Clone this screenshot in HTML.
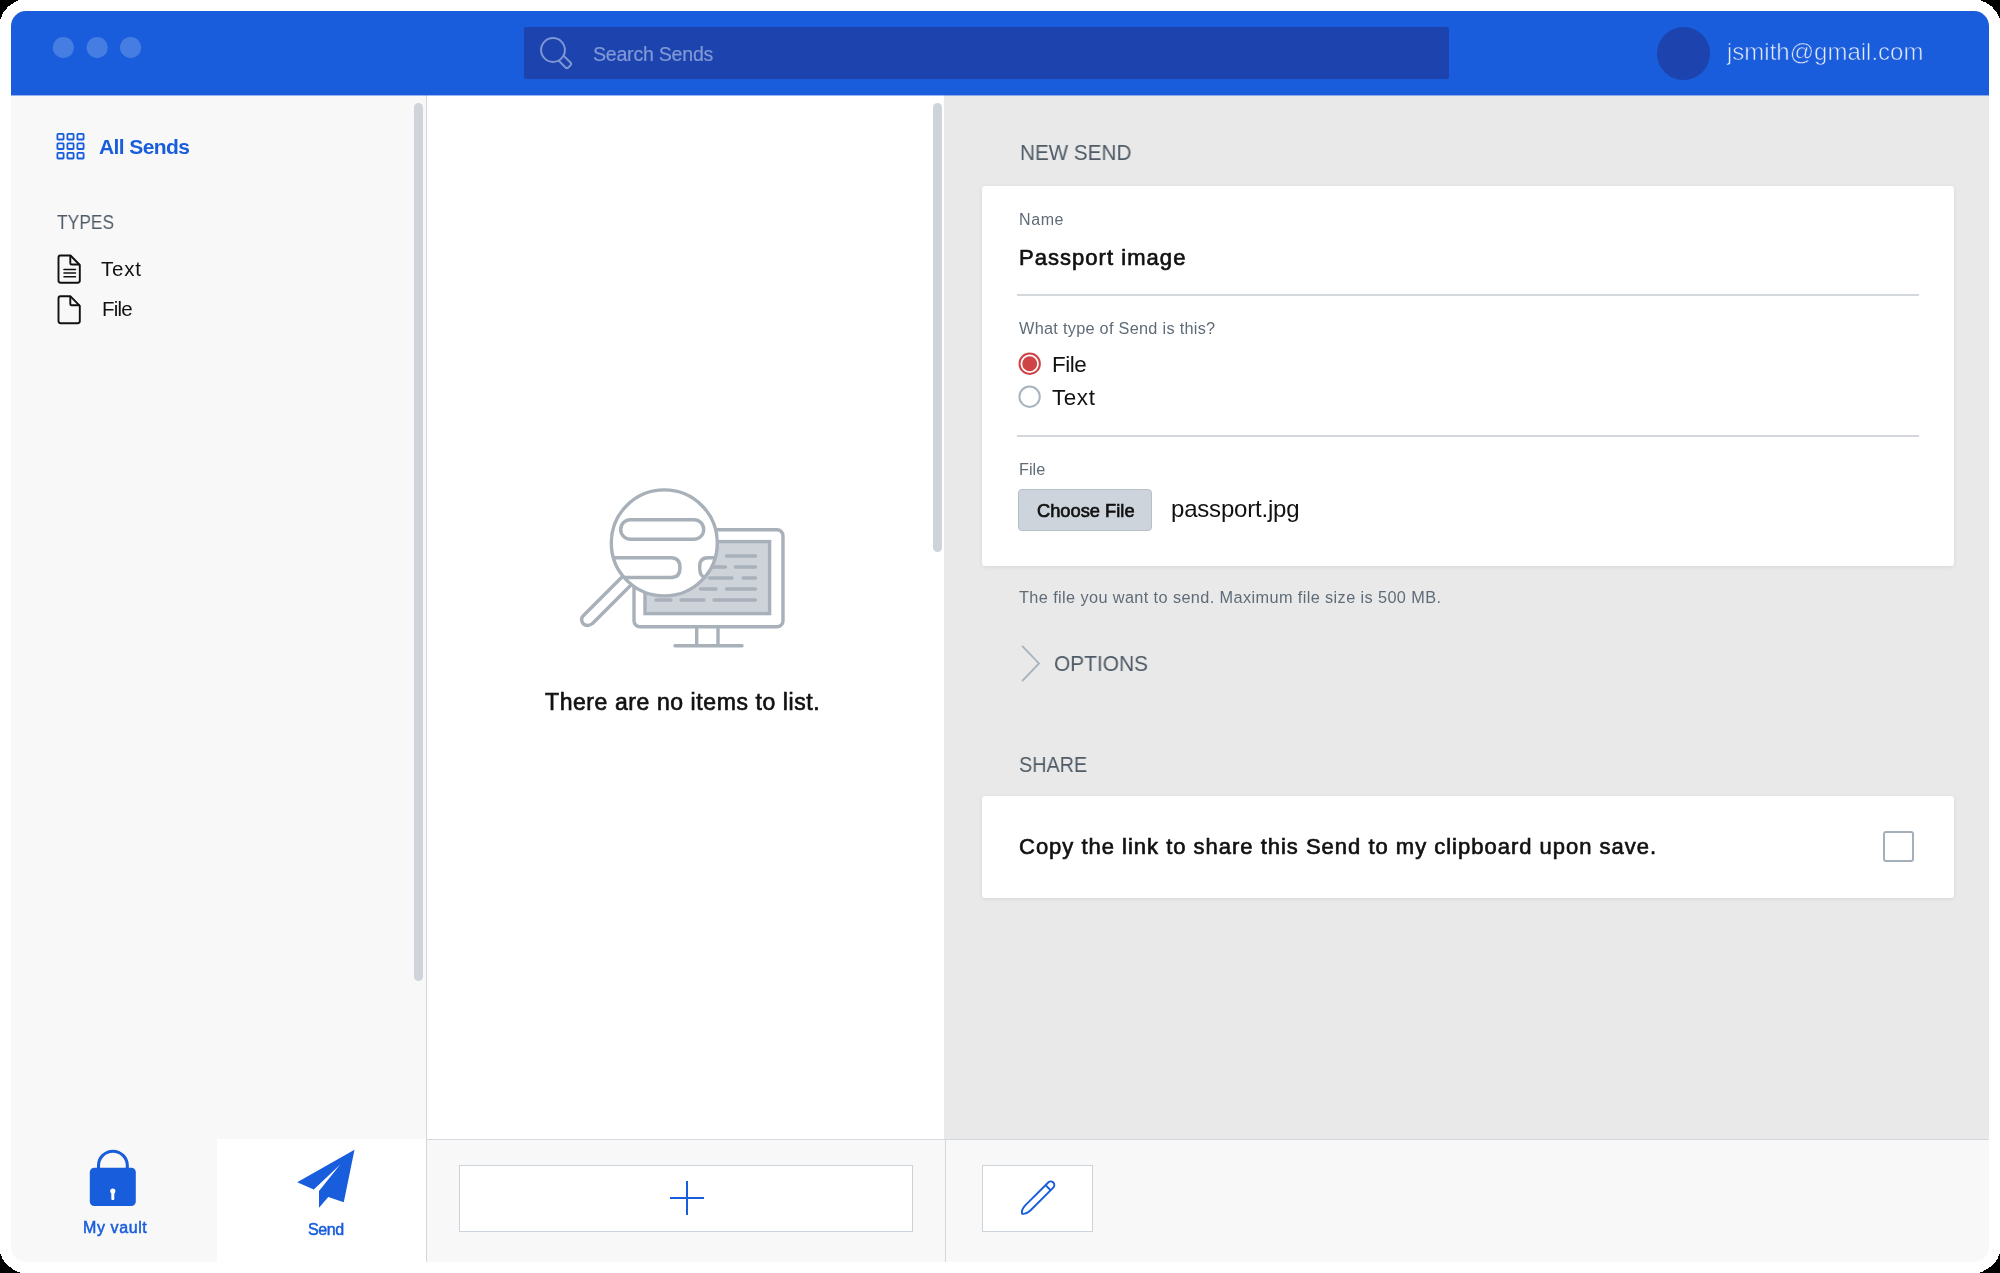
<!DOCTYPE html>
<html><head><meta charset="utf-8">
<style>
html,body{margin:0;padding:0;width:2000px;height:1273px;overflow:hidden;background:#000;}
body{font-family:"Liberation Sans",sans-serif;position:relative;}
#outer{position:absolute;left:0;top:0;width:2000px;height:1273px;background:#fff;}
#win{position:absolute;left:0;top:0;width:2000px;height:1273px;clip-path:inset(11px 11px 11px 11px round 15px);}
.a{position:absolute;}
.t{position:absolute;white-space:nowrap;line-height:1;will-change:transform;}
</style></head>
<body>
<div id="outer"></div>
<div id="win">
  <!-- header -->
  <div class="a" style="left:0;top:0;width:2000px;height:95px;background:#1a5ddc;"></div>
  <div class="a" style="left:0;top:95px;width:2000px;height:1px;background:rgba(26,93,220,0.45);z-index:1;"></div>
  <svg class="a" style="left:40px;top:30px" width="110" height="36" viewBox="40 30 110 36"><g fill="#467de2"><circle cx="63.4" cy="47.6" r="10.6"/><circle cx="97.2" cy="47.6" r="10.6"/><circle cx="130.6" cy="47.6" r="10.6"/></g></svg>
  <div class="a" style="left:524px;top:27px;width:925px;height:52px;background:#1c43ae;border-radius:2px;"></div>
  <svg class="a" style="left:536px;top:33px" width="42" height="42" viewBox="0 0 42 42">
    <circle cx="17" cy="17" r="11.9" fill="none" stroke="#7f96d4" stroke-width="2"/>
    <path d="M-3.5 11.4 V21.2 Q-3.5 23.2 -1.5 23.2 H1.5 Q3.5 23.2 3.5 21.2 V11.4" transform="translate(17,17) rotate(-45)" fill="none" stroke="#7f96d4" stroke-width="2"/>
  </svg>
  <div class="t" id="srch" style="left:593px;top:44.6px;font-size:19.6px;color:#8099d6;-webkit-text-stroke:0.2px #8099d6;letter-spacing:-0.25px;">Search Sends</div>
  <div class="a" style="left:1657px;top:27px;width:53px;height:53px;border-radius:50%;background:#1c43ae;"></div>
  <div class="t" id="email" style="left:1727px;top:40px;font-size:24px;color:#e3eaf8;-webkit-text-stroke:0.6px #1a5ddc;">jsmith@gmail.com</div>

  <!-- sidebar -->
  <div class="a" style="left:0;top:95px;width:426px;height:1180px;background:#f8f8f8;"></div>
  <div class="a" style="left:426px;top:95px;width:1px;height:1180px;background:#d3d8de;"></div>
  <div class="a" style="left:414px;top:103px;width:9px;height:878px;border-radius:5px;background:#cfd4db;"></div>
  <svg class="a" style="left:55px;top:132px" width="32" height="29" viewBox="0 0 32 29">
    <g fill="none" stroke="#175ddc" stroke-width="1.8">
      <rect x="2.4" y="1.9" width="6.2" height="5.6" rx="0.8"/><rect x="12.4" y="1.9" width="6.2" height="5.6" rx="0.8"/><rect x="22.4" y="1.9" width="6.2" height="5.6" rx="0.8"/>
      <rect x="2.4" y="11.4" width="6.2" height="5.6" rx="0.8"/><rect x="12.4" y="11.4" width="6.2" height="5.6" rx="0.8"/><rect x="22.4" y="11.4" width="6.2" height="5.6" rx="0.8"/>
      <rect x="2.4" y="20.9" width="6.2" height="5.6" rx="0.8"/><rect x="12.4" y="20.9" width="6.2" height="5.6" rx="0.8"/><rect x="22.4" y="20.9" width="6.2" height="5.6" rx="0.8"/>
    </g>
  </svg>
  <div class="t" id="allsends" style="left:99px;top:136px;font-size:21px;font-weight:bold;color:#175ddc;letter-spacing:-0.6px;">All Sends</div>
  <div class="t" id="types" style="left:57px;top:212px;font-size:20.5px;color:#4f5b66;transform:scaleX(0.85);transform-origin:0 0;">TYPES</div>
  <svg class="a" style="left:56px;top:253px" width="28" height="32" viewBox="0 0 28 32">
    <path d="M4.5 2.5 H14.5 L23.8 12 V27.5 Q23.8 29.7 21.6 29.7 H4.7 Q2.5 29.7 2.5 27.5 V4.7 Q2.5 2.5 4.5 2.5 Z" fill="none" stroke="#111" stroke-width="1.9" stroke-linejoin="round"/>
    <path d="M14.3 2.6 V10.2 Q14.3 11.5 15.6 11.5 H23.6" fill="none" stroke="#111" stroke-width="1.9"/>
    <path d="M8 16.5 H19.5 M8 20 H19.5 M8 23.7 H19.5" stroke="#111" stroke-width="1.6" stroke-linecap="round"/>
  </svg>
  <div class="t" id="txt1" style="left:101px;top:259px;font-size:20.5px;color:#111;letter-spacing:0.8px;">Text</div>
  <svg class="a" style="left:56px;top:294px" width="28" height="32" viewBox="0 0 28 32">
    <path d="M4.5 2.3 H14.5 L23.8 11.8 V27 Q23.8 29.2 21.6 29.2 H4.7 Q2.5 29.2 2.5 27 V4.5 Q2.5 2.3 4.5 2.3 Z" fill="none" stroke="#111" stroke-width="1.9" stroke-linejoin="round"/>
    <path d="M14.3 2.4 V10 Q14.3 11.3 15.6 11.3 H23.6" fill="none" stroke="#111" stroke-width="1.9"/>
  </svg>
  <div class="t" id="file1" style="left:102px;top:299px;font-size:20.5px;color:#111;letter-spacing:-0.8px;">File</div>

  <!-- sidebar bottom tabs -->
  <div class="a" style="left:217px;top:1139px;width:209px;height:130px;background:#fff;"></div>
  <svg class="a" style="left:86px;top:1146px" width="54" height="64" viewBox="0 0 54 64">
    <path d="M12.5 23 V19.6 A14.4 14.4 0 0 1 41.3 19.6 V23" fill="none" stroke="#175ddc" stroke-width="3.1"/>
    <rect x="3.8" y="21.8" width="46" height="38.2" rx="4.5" fill="#175ddc"/>
    <circle cx="26.8" cy="45" r="2.6" fill="#fff"/>
    <rect x="25.3" y="45" width="3" height="9" rx="1" fill="#fff"/>
  </svg>
  <div class="t" id="myvault" style="left:83px;top:1220px;font-size:16px;font-weight:normal;-webkit-text-stroke:0.5px currentColor;color:#175ddc;letter-spacing:0.6px;">My vault</div>
  <svg class="a" style="left:290px;top:1145px" width="70" height="70" viewBox="0 0 70 70">
    <path d="M64.5 4.75 L7.2 37.3 L23.75 44.5 L50 19.75 L29 46 L29 62.8 L38.3 52 L53.75 57.25 Z" fill="#175ddc"/>
  </svg>
  <div class="t" id="send" style="left:308px;top:1222px;font-size:16px;font-weight:normal;-webkit-text-stroke:0.5px currentColor;color:#175ddc;letter-spacing:-0.43px;">Send</div>

  <!-- middle list -->
  <div class="a" style="left:427px;top:95px;width:518px;height:1044px;background:#fff;"></div>
  <div class="a" style="left:933px;top:103px;width:9px;height:449px;border-radius:5px;background:#cfd4db;"></div>
  <svg class="a" style="left:560px;top:470px" width="250" height="200" viewBox="560 470 250 200">
    <g fill="none" stroke="#a8b0b9" stroke-width="3.4" stroke-linecap="round" stroke-linejoin="round">
      <rect x="634" y="529.8" width="149" height="97" rx="6"/>
      <rect x="645" y="541.6" width="124.6" height="72" fill="#ced3da" stroke-linejoin="miter" stroke-linecap="butt"/>
      <path d="M726.5 556 H755.5 M709.5 567 H725.5 M735.5 567 H755.5 M709.5 578 H732 M743 578 H755.5 M700.5 589 H716 M726.5 589 H755.5 M656 600 H671 M681 600 H704 M714 600 H755.5"/>
      <path d="M696.7 628.5 V645 M718 628.5 V645 M675 645.7 H742"/>
    </g>
    <defs><clipPath id="mclip"><circle cx="664.3" cy="542.9" r="53"/></clipPath></defs>
    <circle cx="664.3" cy="542.9" r="53" fill="#fff"/>
    <g clip-path="url(#mclip)" fill="none" stroke="#a8b0b9" stroke-width="3.4">
      <rect x="620.7" y="519.7" width="83" height="19.5" rx="9.75"/>
      <path d="M600 557.8 H671 Q680 557.8 680 567.7 Q680 577.5 671 577.5 H600"/>
      <path d="M740 557.8 H708 Q699.7 557.8 699.7 566 V568 Q699.7 577 706 577.5"/>
    </g>
    <g fill="none" stroke="#a8b0b9" stroke-width="3.4" stroke-linecap="round" stroke-linejoin="round">
      <circle cx="664.3" cy="542.9" r="53"/>
      <path d="M621.5 577.5 L583.5 615.5 Q580 619 583 623.5 Q587 627.5 592.5 623.5 L630.5 585.5"/>
    </g>
  </svg>
  <div class="t" id="noitems" style="left:545px;top:691px;font-size:23px;font-weight:normal;-webkit-text-stroke:0.65px currentColor;color:#111;letter-spacing:0.58px;">There are no items to list.</div>

  <!-- right panel -->
  <div class="a" style="left:944px;top:95px;width:1060px;height:1044px;background:#e9e9e9;"></div>
  <div class="t" id="newsend" style="left:1020px;top:143px;font-size:21.3px;color:#4f5b66;transform:scaleX(0.97);transform-origin:0 0;">NEW SEND</div>
  <div class="a" style="left:982px;top:186px;width:972px;height:380px;background:#fff;border-radius:3px;box-shadow:0 1px 5px rgba(0,0,0,0.07),0 0 1px rgba(0,0,0,0.06);"></div>
  <div class="t" id="name" style="left:1019px;top:212px;font-size:16px;color:#5f6c78;letter-spacing:0.6px;">Name</div>
  <div class="t" id="passimg" style="left:1019px;top:247px;font-size:22px;font-weight:normal;-webkit-text-stroke:0.65px currentColor;color:#111;letter-spacing:1.04px;">Passport image</div>
  <div class="a" style="left:1017px;top:294px;width:902px;height:1.5px;background:#d5d9de;"></div>
  <div class="t" id="whattype" style="left:1019px;top:320px;font-size:16.3px;color:#5f6c78;letter-spacing:0.28px;">What type of Send is this?</div>
  <svg class="a" style="left:1014px;top:348px" width="32" height="32" viewBox="0 0 32 32"><circle cx="15.7" cy="15.7" r="10.2" fill="#fff" stroke="#cf4447" stroke-width="2"/><circle cx="15.7" cy="15.7" r="7.45" fill="#cf4447"/></svg>
  <div class="t" id="rfile" style="left:1052px;top:354px;font-size:22.4px;color:#111;letter-spacing:-0.5px;">File</div>
  <svg class="a" style="left:1014px;top:381px" width="32" height="32" viewBox="0 0 32 32"><circle cx="15.6" cy="15.7" r="10.2" fill="#fff" stroke="#aab4bf" stroke-width="2"/></svg>
  <div class="t" id="rtext" style="left:1052px;top:387px;font-size:22.4px;color:#111;letter-spacing:0.6px;">Text</div>
  <div class="a" style="left:1017px;top:435px;width:902px;height:1.5px;background:#d5d9de;"></div>
  <div class="t" id="filelbl" style="left:1019px;top:461px;font-size:16.3px;color:#5f6c78;">File</div>
  <div class="a" style="left:1018px;top:489px;width:134px;height:41.5px;box-sizing:border-box;background:#ced4dc;border:1px solid #b7bfc8;border-radius:4px;"></div>
  <div class="t" id="choose" style="left:1037px;top:502px;font-size:18.3px;font-weight:normal;-webkit-text-stroke:0.65px currentColor;color:#111;">Choose File</div>
  <div class="t" id="passjpg" style="left:1171px;top:497px;font-size:24px;color:#111;letter-spacing:-0.2px;">passport.jpg</div>
  <div class="t" id="helper" style="left:1019px;top:589px;font-size:16.3px;color:#5f6c78;letter-spacing:0.39px;">The file you want to send. Maximum file size is 500 MB.</div>
  <svg class="a" style="left:1015px;top:640px" width="30" height="46" viewBox="0 0 30 46">
    <path d="M7.6 6.4 L24 23.4 L7.6 40.6" fill="none" stroke="#a7b2bd" stroke-width="1.8" stroke-linecap="round" stroke-linejoin="miter"/>
  </svg>
  <div class="t" id="options" style="left:1054px;top:653px;font-size:22px;color:#4f5b66;transform:scaleX(0.95);transform-origin:0 0;">OPTIONS</div>
  <div class="t" id="share" style="left:1019px;top:754px;font-size:22px;color:#4f5b66;transform:scaleX(0.9);transform-origin:0 0;">SHARE</div>
  <div class="a" style="left:982px;top:795.5px;width:972px;height:102px;background:#fff;border-radius:3px;box-shadow:0 1px 5px rgba(0,0,0,0.07),0 0 1px rgba(0,0,0,0.06);"></div>
  <div class="t" id="copy" style="left:1019px;top:836px;font-size:22px;font-weight:normal;-webkit-text-stroke:0.65px currentColor;color:#111;letter-spacing:0.99px;">Copy the link to share this Send to my clipboard upon save.</div>
  <div class="a" style="left:1883px;top:831px;width:31px;height:31px;box-sizing:border-box;border:2px solid #a5afba;border-radius:3px;"></div>

  <!-- bottom bars -->
  <div class="a" style="left:427px;top:1139px;width:1600px;height:1px;background:#d3d8de;"></div>
  <div class="a" style="left:427px;top:1140px;width:1600px;height:140px;background:#f8f8f8;"></div>
  <div class="a" style="left:945px;top:1139px;width:1px;height:140px;background:#d3d8de;"></div>
  <div class="a" style="left:459px;top:1165px;width:453.5px;height:66.5px;box-sizing:border-box;background:#fff;border:1px solid #cdd3da;"></div>
  <svg class="a" style="left:666.7px;top:1178.2px" width="40" height="40" viewBox="0 0 40 40">
    <path d="M20 3 V37 M3 20 H37" stroke="#175ddc" stroke-width="2"/>
  </svg>
  <div class="a" style="left:981.5px;top:1165px;width:111px;height:66.5px;box-sizing:border-box;background:#fff;border:1px solid #cdd3da;"></div>
  <svg class="a" style="left:1010px;top:1170px" width="55" height="55" viewBox="0 0 55 55">
    <g transform="translate(11.9,43.9) rotate(-45)" fill="none" stroke="#175ddc" stroke-width="1.9" stroke-linejoin="round">
      <path d="M0.3 0 Q2.2 -3.3 8 -3.6 L40.8 -3.6 A3.6 3.6 0 0 1 40.8 3.6 L8 3.6 Q2.2 3.3 0.3 0 Z"/>
      <path d="M37 -3.6 V3.6"/>
    </g>
  </svg>
</div>
<svg class="a" style="left:0;top:0;z-index:5" width="2000" height="1273" viewBox="0 0 2000 1273" shape-rendering="crispEdges">
  <g fill="#000">
    <path d="M0 0 H19.5 C12 2.5 3 9 0 20 Z"/>
    <path d="M2000 0 H1980 C1988 2.5 1997 9 2000 19.5 Z"/>
    <path d="M2000 1273 H1978.5 C1987 1270.5 1997 1264 2000 1253 Z"/>
    <path d="M0 1273 H21 C13 1270.5 3 1264 0 1253 Z"/>
  </g>
</svg>
</body></html>
